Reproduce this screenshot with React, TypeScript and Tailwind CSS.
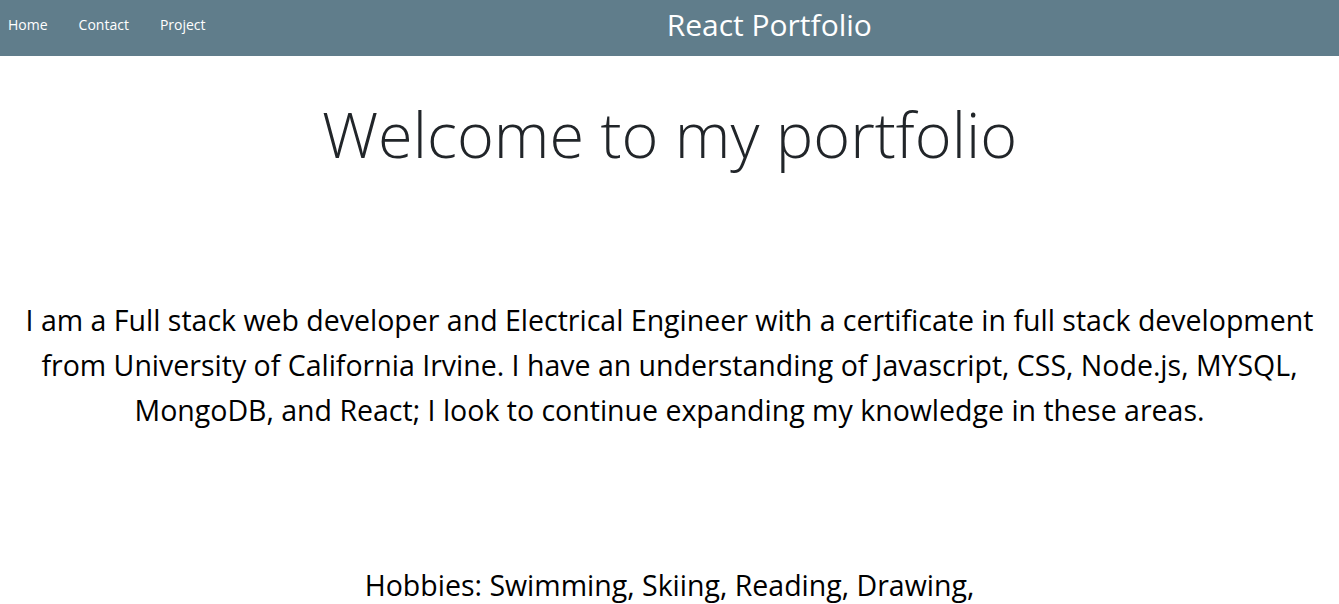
import React from 'react';

const links = ['Home', 'Contact', 'Project'];

export default function App() {
  return (
    <div className="min-h-screen bg-white font-['Open_Sans',sans-serif] text-black">
      {/* Nav bar */}
      <header className="flex h-[56px] items-center bg-[#607d8b] pb-[8px]">
        <nav className="flex items-center gap-[31px] pl-[8px]">
          {links.map((link) => (
            <a key={link} href="#" className="text-[14px] text-white">
              {link}
            </a>
          ))}
        </nav>
        <h2 className="flex-1 pr-[6px] text-center text-[30px] text-white">React Portfolio</h2>
      </header>

      <main className="px-[20px] text-center">
        <h1 className="pt-[40px] text-[63px] font-light leading-[1.2] text-[#212529]">
          Welcome to my portfolio
        </h1>

        <p className="mx-auto mt-[126px] text-[28.5px] leading-[45px]">
          I am a Full stack web developer and Electrical Engineer with a certificate in full stack development from University of California Irvine. I have an understanding of Javascript, CSS, Node.js, MYSQL, MongoDB, and React; I look to continue expanding my knowledge in these areas.
        </p>

        <p className="mt-[130px] text-[28.5px] leading-[45px]">
          Hobbies: Swimming, Skiing, Reading, Drawing,
        </p>
      </main>
    </div>
  );
}
